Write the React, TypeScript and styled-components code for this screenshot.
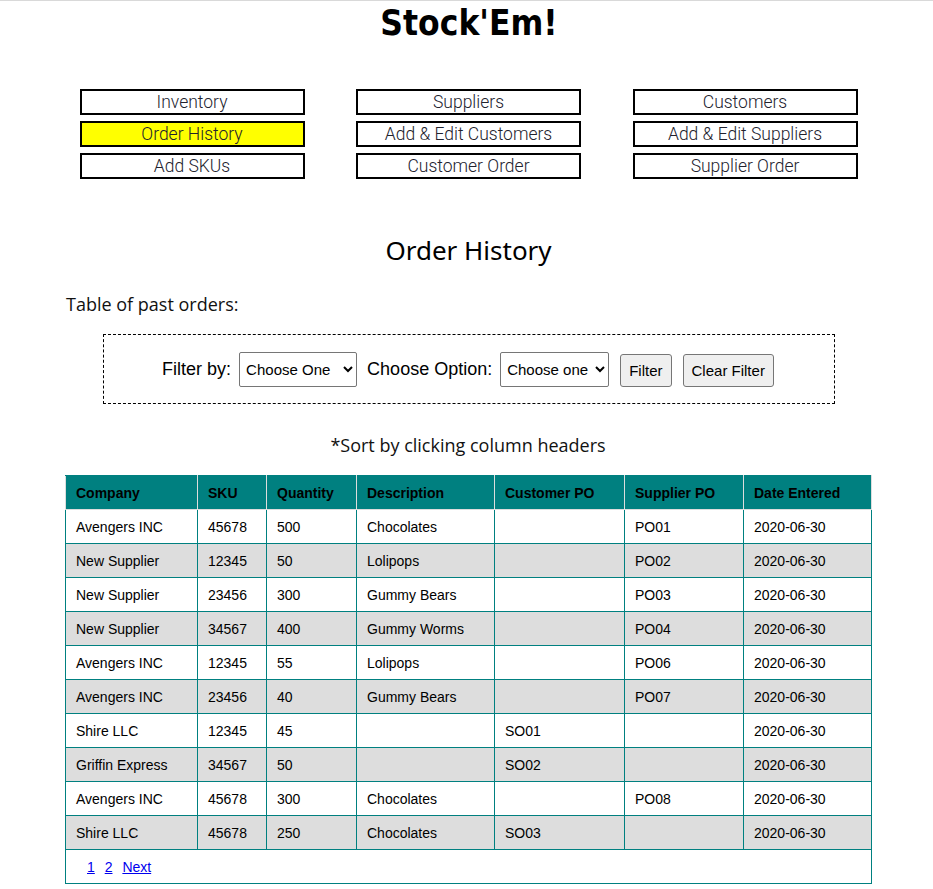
import React from "react";
import styled, { createGlobalStyle } from "styled-components";

const Global = createGlobalStyle`
  html, body { margin: 0; padding: 0; background: #fff; }
  body { border-top: 1px solid #d9d9d9; font-family: "Open Sans", "Liberation Sans", sans-serif; color: #111; }
`;

const Page = styled.div`
  width: 933px;
  display: flex;
  flex-direction: column;
  align-items: center;
`;

const Title = styled.h1`
  margin: 0 0 0 5px;
  font-family: "DejaVu Sans Condensed", "DejaVu Sans", sans-serif;
  font-stretch: condensed;
  font-weight: 700;
  font-size: 35px;
  line-height: 44px;
  color: #000;
`;

const NavGrid = styled.nav`
  margin: 44px 0 0 4px;
  display: grid;
  grid-template-columns: repeat(3, 225px);
  column-gap: 51.5px;
  row-gap: 6px;
`;

const NavButton = styled.a<{ $active?: boolean }>`
  display: flex;
  align-items: center;
  justify-content: center;
  height: 22px;
  border: 2px solid #000;
  background: ${(p) => (p.$active ? "#ffff00" : "#fff")};
  font-family: Roboto, "Liberation Sans", sans-serif;
  font-weight: 300;
  font-size: 17.5px;
  color: #22222e;
  text-decoration: none;
  cursor: pointer;
`;

const Heading = styled.h2`
  margin: 53px 0 0 4px;
  font-family: "Noto Sans", "Open Sans", sans-serif;
  font-weight: 400;
  font-size: 26px;
  line-height: 36px;
  color: #000;
`;

const Section = styled.section`
  align-self: stretch;
  padding: 0 62px 0 65px;
  display: flex;
  flex-direction: column;
`;

const Intro = styled.p`
  margin: 23px 0 0 1px;
  font-family: "Open Sans", sans-serif;
  font-size: 18px;
  line-height: 26px;
  color: #111;
`;

const FilterBox = styled.div`
  box-sizing: border-box;
  margin: 17px 0 0 38px;
  width: 732px;
  height: 70px;
  border: 1px dashed #000;
  display: flex;
  align-items: center;
  justify-content: center;
  gap: 8px;
  padding-right: 4px;
`;

const Label = styled.label`
  font-family: "Liberation Sans", Arial, sans-serif;
  font-size: 18px;
  color: #000;
  margin-left: 2px;
`;

const Select = styled.select<{ $w: number }>`
  width: ${(p) => p.$w}px;
  height: 35px;
  font-family: "Liberation Sans", Arial, sans-serif;
  font-size: 15px;
  color: #000;
  background: #fff;
  border: 1px solid #767676;
  border-radius: 2px;
  padding: 0 2px;
`;

const Button = styled.button`
  height: 33px;
  margin: 2px 0 0 3px;
  padding: 0 8px;
  font-family: "Liberation Sans", Arial, sans-serif;
  font-size: 15px;
  color: #000;
  background: #efefef;
  border: 1px solid #767676;
  border-radius: 3px;
`;

const SortNote = styled.p`
  margin: 28px 0 0;
  text-align: center;
  font-family: "Open Sans", sans-serif;
  font-size: 18px;
  line-height: 26px;
  color: #111;
`;

const Table = styled.table`
  margin-top: 17px;
  width: 806px;
  border-collapse: collapse;
  table-layout: fixed;
  font-family: "Liberation Sans", Arial, sans-serif;
  font-size: 14px;
  color: #000;
  border: 1px solid #008080;
`;

const Th = styled.th<{ $w: number }>`
  box-sizing: border-box;
  width: ${(p) => p.$w}px;
  height: 34px;
  padding: 0 10px;
  text-align: left;
  font-weight: 700;
  background: #008080;
  border: 1px solid #dddddd;
  border-top-color: #008080;
  color: #000;
`;

const Tr = styled.tr<{ $alt?: boolean }>`
  background: ${(p) => (p.$alt ? "#dddddd" : "#ffffff")};
`;

const Td = styled.td`
  height: 33px;
  padding: 0 10px;
  border: 1px solid #008080;
  white-space: nowrap;
  overflow: hidden;
`;

const PagerCell = styled.td`
  height: 33px;
  padding: 0 0 0 18px;
  border: 1px solid #008080;
`;

const PageLink = styled.a`
  color: #0000ee;
  text-decoration: underline;
  margin: 0 3px;
  cursor: pointer;
`;

const columns: [string, number][] = [
  ["Company", 132],
  ["SKU", 69],
  ["Quantity", 90],
  ["Description", 138],
  ["Customer PO", 130],
  ["Supplier PO", 119],
  ["Date Entered", 128],
];

const rows: string[][] = [
  ["Avengers INC", "45678", "500", "Chocolates", "", "PO01", "2020-06-30"],
  ["New Supplier", "12345", "50", "Lolipops", "", "PO02", "2020-06-30"],
  ["New Supplier", "23456", "300", "Gummy Bears", "", "PO03", "2020-06-30"],
  ["New Supplier", "34567", "400", "Gummy Worms", "", "PO04", "2020-06-30"],
  ["Avengers INC", "12345", "55", "Lolipops", "", "PO06", "2020-06-30"],
  ["Avengers INC", "23456", "40", "Gummy Bears", "", "PO07", "2020-06-30"],
  ["Shire LLC", "12345", "45", "", "SO01", "", "2020-06-30"],
  ["Griffin Express", "34567", "50", "", "SO02", "", "2020-06-30"],
  ["Avengers INC", "45678", "300", "Chocolates", "", "PO08", "2020-06-30"],
  ["Shire LLC", "45678", "250", "Chocolates", "SO03", "", "2020-06-30"],
];

const navItems: [string, boolean][] = [
  ["Inventory", false],
  ["Suppliers", false],
  ["Customers", false],
  ["Order History", true],
  ["Add & Edit Customers", false],
  ["Add & Edit Suppliers", false],
  ["Add SKUs", false],
  ["Customer Order", false],
  ["Supplier Order", false],
];

export default function App() {
  return (
    <Page>
      <Global />
      <Title>Stock'Em!</Title>
      <NavGrid>
        {navItems.map(([label, active]) => (
          <NavButton key={label} $active={active}>
            {label}
          </NavButton>
        ))}
      </NavGrid>
      <Heading>Order History</Heading>
      <Section>
        <Intro>Table of past orders:</Intro>
        <FilterBox>
          <Label>Filter by:</Label>
          <Select $w={118} defaultValue="">
            <option value="">Choose One</option>
            <option>Company</option>
            <option>SKU</option>
          </Select>
          <Label>Choose Option:</Label>
          <Select $w={109} defaultValue="">
            <option value="">Choose one</option>
          </Select>
          <Button>Filter</Button>
          <Button>Clear Filter</Button>
        </FilterBox>
        <SortNote>*Sort by clicking column headers</SortNote>
        <Table>
          <thead>
            <tr>
              {columns.map(([name, w]) => (
                <Th key={name} $w={w}>
                  {name}
                </Th>
              ))}
            </tr>
          </thead>
          <tbody>
            {rows.map((r, i) => (
              <Tr key={i} $alt={i % 2 === 1}>
                {r.map((c, j) => (
                  <Td key={j}>{c}</Td>
                ))}
              </Tr>
            ))}
            <tr>
              <PagerCell colSpan={7}>
                <PageLink>1</PageLink> <PageLink>2</PageLink> <PageLink>Next</PageLink>
              </PagerCell>
            </tr>
          </tbody>
        </Table>
      </Section>
    </Page>
  );
}
